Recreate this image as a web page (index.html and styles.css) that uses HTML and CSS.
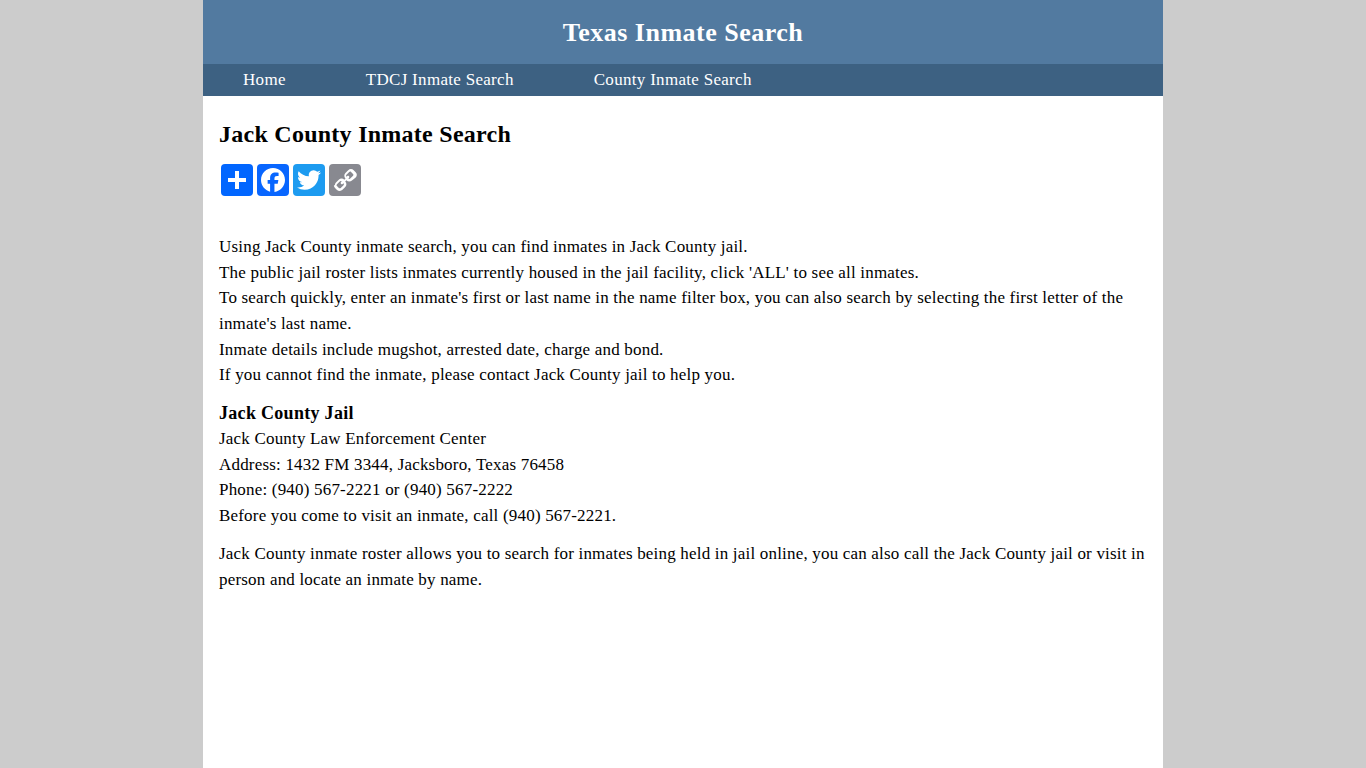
FILE: index.html
```html
<!DOCTYPE html>
<html lang="en">
<head>
<meta charset="utf-8">
<title>Jack County Inmate Search</title>
<link rel="stylesheet" href="styles.css">
</head>
<body>
<div class="page">
  <header class="site-header"><div class="site-title">Texas Inmate Search</div></header>
  <nav class="site-nav">
    <a href="#">Home</a>
    <a href="#">TDCJ Inmate Search</a>
    <a href="#">County Inmate Search</a>
  </nav>
  <main class="content">
    <h1>Jack County Inmate Search</h1>
    <div class="share">
      <a href="#" class="icon share-plus" aria-label="Share"><svg viewBox="0 0 32 32"><path fill="#fff" d="M14 7h4v18h-4z"/><path fill="#fff" d="M7 14h18v4H7z"/></svg></a>
      <a href="#" class="icon share-fb" aria-label="Facebook"><svg viewBox="0 0 32 32"><path fill="#fff" d="M28 16c0-6.627-5.373-12-12-12S4 9.373 4 16c0 5.628 3.875 10.35 9.101 11.647v-7.98h-2.474V16H13.1v-1.58c0-4.085 1.849-5.978 5.859-5.978.76 0 2.072.15 2.608.298v3.325c-.283-.03-.775-.045-1.386-.045-1.967 0-2.728.745-2.728 2.683V16h3.92l-.673 3.667h-3.247v8.245C23.395 27.195 28 22.135 28 16"/></svg></a>
      <a href="#" class="icon share-tw" aria-label="Twitter"><svg viewBox="0 0 32 32"><path fill="#fff" d="M28 8.557a10 10 0 0 1-2.828.775 4.93 4.93 0 0 0 2.166-2.725 9.7 9.7 0 0 1-3.13 1.194 4.92 4.92 0 0 0-3.593-1.55 4.924 4.924 0 0 0-4.794 6.049c-4.09-.21-7.72-2.17-10.15-5.15a4.94 4.94 0 0 0-.665 2.477c0 1.71.87 3.214 2.19 4.1a5 5 0 0 1-2.23-.616v.06c0 2.39 1.7 4.38 3.952 4.83-.414.115-.85.174-1.297.174q-.476-.001-.928-.086a4.935 4.935 0 0 0 4.6 3.42 9.9 9.9 0 0 1-6.114 2.107q-.597 0-1.175-.068a13.95 13.95 0 0 0 7.55 2.213c9.056 0 14.01-7.507 14.01-14.013q0-.32-.015-.637c.96-.695 1.795-1.56 2.455-2.55z"/></svg></a>
      <a href="#" class="icon share-link" aria-label="Copy Link"><svg viewBox="0 0 32 32"><path transform="translate(32 0) scale(-1 1)" fill="#fff" d="M24.412 21.177c0-.36-.126-.665-.377-.917l-2.804-2.804a1.25 1.25 0 0 0-.92-.377c-.377 0-.7.144-.97.43.026.028.11.11.255.25.144.14.24.236.29.29s.117.14.2.25c.087.11.146.216.176.32.03.106.044.223.044.35 0 .36-.126.666-.377.918a1.25 1.25 0 0 1-.918.377 1 1 0 0 1-.35-.045 1 1 0 0 1-.32-.174 3 3 0 0 1-.25-.2 9 9 0 0 1-.29-.29c-.14-.142-.223-.23-.25-.254-.297.28-.445.607-.445.984 0 .36.126.664.377.916l2.778 2.79c.243.243.548.364.917.364.36 0 .665-.118.917-.35l1.982-1.97c.252-.25.378-.55.378-.9zm-9.477-9.504c0-.36-.126-.665-.377-.917l-2.777-2.79a1.235 1.235 0 0 0-.917-.378c-.35 0-.656.12-.917.364L7.967 9.92c-.25.252-.377.553-.377.903 0 .36.126.665.377.917l2.804 2.804c.243.243.55.364.918.364.377 0 .7-.14.97-.418-.026-.027-.11-.11-.255-.25s-.24-.235-.29-.29a3 3 0 0 1-.2-.25 1 1 0 0 1-.176-.32 1.4 1.4 0 0 1-.044-.35c0-.36.126-.665.377-.917.252-.252.557-.378.917-.378.126 0 .243.015.35.044.108.03.215.09.32.176.106.085.19.15.25.2.06.05.157.146.29.29.14.142.223.23.25.254.297-.28.445-.607.445-.984zm12.19 9.504c0 1.078-.386 1.99-1.156 2.736l-1.98 1.97c-.747.748-1.66 1.122-2.737 1.122-1.087 0-2.004-.38-2.75-1.148l-2.777-2.79c-.748-.747-1.122-1.66-1.122-2.737 0-1.104.396-2.04 1.188-2.81l-1.188-1.188c-.77.79-1.7 1.186-2.79 1.186-1.08 0-2-.377-2.75-1.135L5.3 13.6c-.747-.747-1.12-1.66-1.12-2.737 0-1.078.385-1.99 1.155-2.736l1.98-1.97c.747-.748 1.66-1.122 2.737-1.122 1.087 0 2.004.38 2.75 1.148l2.777 2.79c.748.747 1.122 1.66 1.122 2.737 0 1.104-.396 2.04-1.188 2.81l1.188 1.187c.77-.79 1.7-1.186 2.79-1.186 1.08 0 2 .376 2.75 1.133l2.804 2.804c.748.747 1.122 1.66 1.122 2.736z"/></svg></a>
    </div>
    <p class="intro">Using Jack County inmate search, you can find inmates in Jack County jail.<br>
    The public jail roster lists inmates currently housed in the jail facility, click 'ALL' to see all inmates.<br>
    To search quickly, enter an inmate's first or last name in the name filter box, you can also search by selecting the first letter of the inmate's last name.<br>
    Inmate details include mugshot, arrested date, charge and bond.<br>
    If you cannot find the inmate, please contact Jack County jail to help you.</p>
    <p><strong>Jack County Jail</strong><br>
    Jack County Law Enforcement Center<br>
    Address: 1432 FM 3344, Jacksboro, Texas 76458<br>
    Phone: (940) 567-2221 or (940) 567-2222<br>
    Before you come to visit an inmate, call (940) 567-2221.</p>
    <p>Jack County inmate roster allows you to search for inmates being held in jail online, you can also call the Jack County jail or visit in person and locate an inmate by name.</p>
  </main>
</div>
</body>
</html>
```
FILE: styles.css
```css
html, body { margin: 0; padding: 0; height: 100%; }
body {
  background: #ccc;
  color: #000;
  font-family: "Liberation Serif", "Times New Roman", serif;
  font-size: 17px;
  line-height: 25.6px;
  letter-spacing: 0.19px;
}
.page { width: 960px; min-height: 100%; margin: 0 auto; background: #fff; }
.site-header { box-sizing: border-box; height: 64px; padding-top: 2px; background: #527aa0; display: flex; align-items: center; justify-content: center; }
.site-title { color: #fff; font-size: 26px; font-weight: bold; letter-spacing: 0.5px; }
.site-nav { height: 32px; background: #3d6182; display: flex; align-items: center; }
.site-nav a { color: #fff; text-decoration: none; padding: 0 40px; letter-spacing: 0.3px; }
.content { padding: 22px 16px 0; }
h1 { margin: 0 0 12px; font-size: 24px; line-height: 32px; font-weight: bold; letter-spacing: 0.26px; }
.share { display: flex; height: 36px; margin-bottom: 36.2px; }
.icon { display: block; width: 32px; height: 32px; margin: 2px; border-radius: 4px; overflow: hidden; }
.icon svg { display: block; width: 32px; height: 32px; }
.share-plus { background: #0166ff; }
.share-fb { background: #0866ff; }
.share-tw { background: #1d9bf0; }
.share-link { background: #888990; }
p { margin: 0 0 12.8px; }
strong { font-size: 18px; line-height: 1; letter-spacing: 0.3px; }
```
